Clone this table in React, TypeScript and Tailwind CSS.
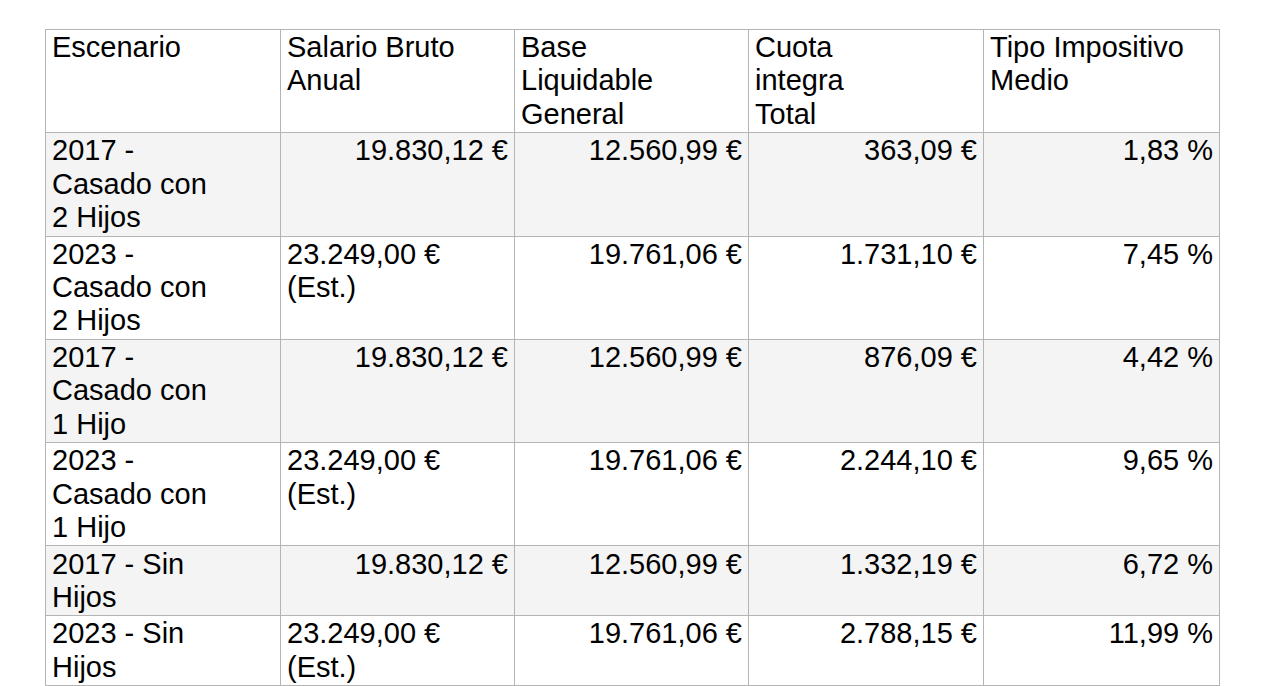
import React from 'react';

type Cell = { lines: string[]; right?: boolean };

const header: string[][] = [
    ['Escenario'],
    ['Salario Bruto', 'Anual'],
    ['Base', 'Liquidable', 'General'],
    ['Cuota', 'integra', 'Total'],
    ['Tipo Impositivo', 'Medio'],
];

const est = (v: string): Cell => ({ lines: [v, '(Est.)'] });
const num = (v: string): Cell => ({ lines: [v], right: true });

const rows: Cell[][] = [
    [{ lines: ['2017 -', 'Casado con', '2 Hijos'] }, num('19.830,12 €'), num('12.560,99 €'), num('363,09 €'), num('1,83 %')],
    [{ lines: ['2023 -', 'Casado con', '2 Hijos'] }, est('23.249,00 €'), num('19.761,06 €'), num('1.731,10 €'), num('7,45 %')],
    [{ lines: ['2017 -', 'Casado con', '1 Hijo'] }, num('19.830,12 €'), num('12.560,99 €'), num('876,09 €'), num('4,42 %')],
    [{ lines: ['2023 -', 'Casado con', '1 Hijo'] }, est('23.249,00 €'), num('19.761,06 €'), num('2.244,10 €'), num('9,65 %')],
    [{ lines: ['2017 - Sin', 'Hijos'] }, num('19.830,12 €'), num('12.560,99 €'), num('1.332,19 €'), num('6,72 %')],
    [{ lines: ['2023 - Sin', 'Hijos'] }, est('23.249,00 €'), num('19.761,06 €'), num('2.788,15 €'), num('11,99 %')],
];

const Lines: React.FC<{ lines: string[] }> = ({ lines }) => (
    <>
        {lines.map((l, i) => (
            <React.Fragment key={i}>
                {i > 0 && <br />}
                {l}
            </React.Fragment>
        ))}
    </>
);

const App: React.FC = () => {
    return (
        <div className="min-h-screen bg-white pt-[29px] pl-[45px] font-['Liberation_Sans',Arial,sans-serif] text-[29px] leading-[33.3px] text-black">
            <table className="table-fixed border-collapse w-[1174px]">
                <colgroup>
                    <col className="w-[235px]" />
                    <col className="w-[234px]" />
                    <col className="w-[234px]" />
                    <col className="w-[235px]" />
                    <col className="w-[236px]" />
                </colgroup>
                <thead>
                    <tr className="bg-white">
                        {header.map((h, i) => (
                            <th key={i} className="border border-[#b4b4b4] px-[6px] py-[1.2px] text-left align-top font-normal whitespace-nowrap">
                                <Lines lines={h} />
                            </th>
                        ))}
                    </tr>
                </thead>
                <tbody>
                    {rows.map((r, ri) => (
                        <tr key={ri} className={ri % 2 === 0 ? 'bg-[#f4f4f4]' : 'bg-white'}>
                            {r.map((c, ci) => (
                                <td
                                    key={ci}
                                    className={`border border-[#b4b4b4] px-[6px] py-[1.2px] align-top whitespace-nowrap ${c.right ? 'text-right' : 'text-left'}`}
                                >
                                    <Lines lines={c.lines} />
                                </td>
                            ))}
                        </tr>
                    ))}
                </tbody>
            </table>
        </div>
    );
};

export default App;
